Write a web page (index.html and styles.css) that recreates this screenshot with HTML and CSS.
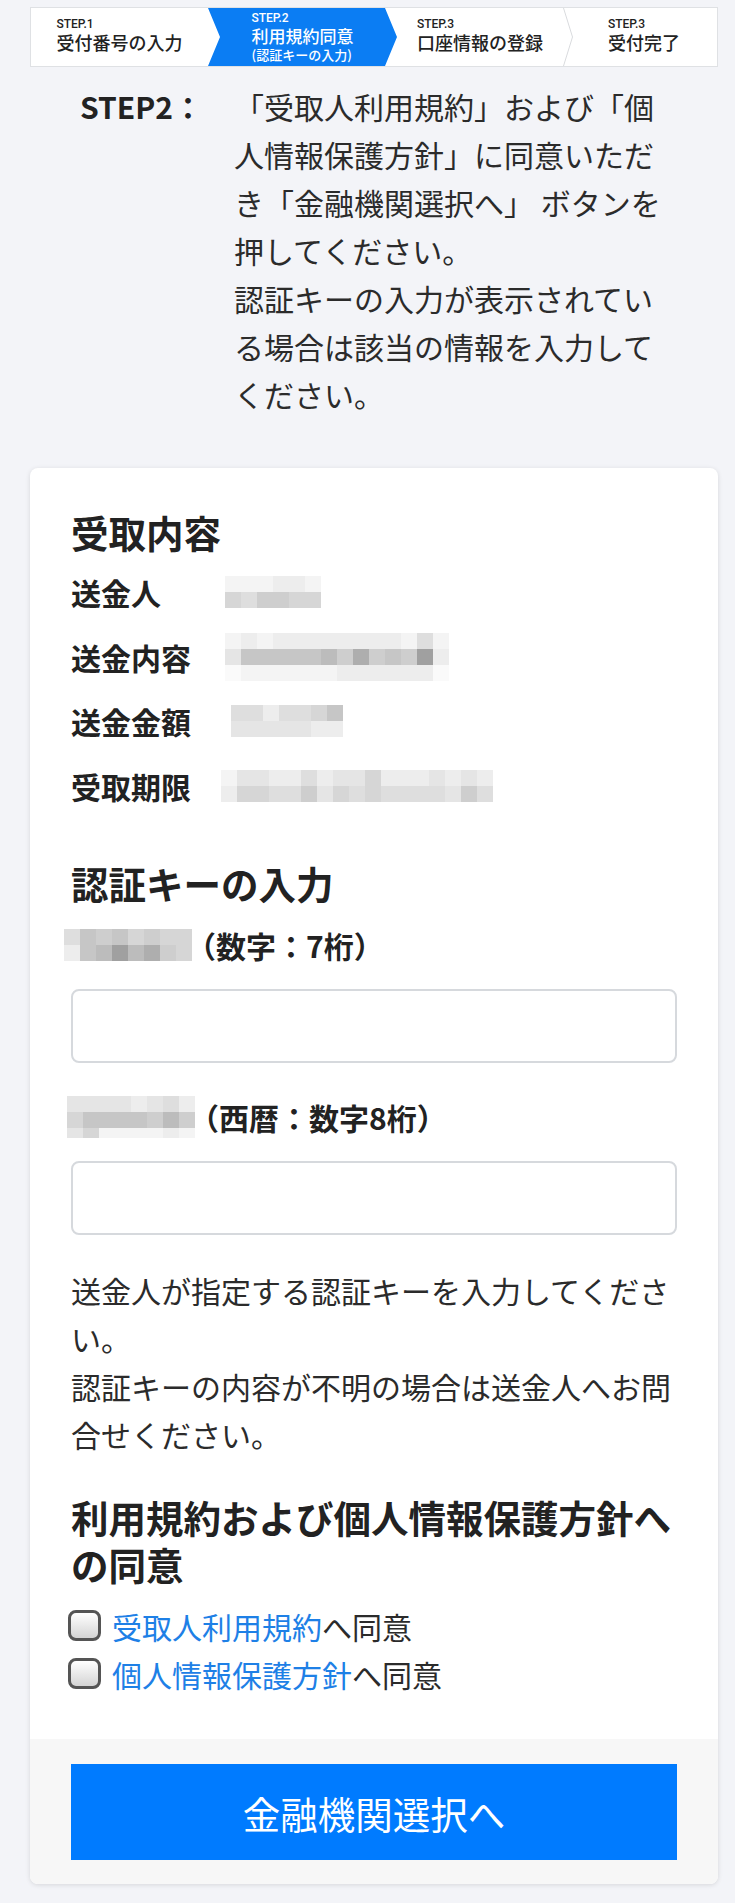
FILE: index.html
```html
<!DOCTYPE html>
<html lang="ja">
<head>
<meta charset="utf-8">
<title>利用規約同意</title>
<link rel="stylesheet" href="styles.css">
</head>
<body>
<div class="page">
  <ol class="steps">
    <li class="step step-1">
      <div class="step-text"><span class="step-no">STEP.1</span><span class="step-name">受付番号の入力</span></div>
    </li>
    <li class="step step-2">
      <div class="step-text"><span class="step-no">STEP.2</span><span class="step-name">利用規約同意</span><span class="step-sub">(認証キーの入力)</span></div>
    </li>
    <li class="step step-3">
      <div class="step-text"><span class="step-no">STEP.3</span><span class="step-name">口座情報の登録</span></div>
    </li>
    <li class="step step-4">
      <svg class="step-divider" width="11" height="58" viewBox="0 0 11 58"><polyline points="0.5,0 9.5,29 0.5,58" fill="none" stroke="#d9dbde" stroke-width="1"/></svg>
      <div class="step-text"><span class="step-no">STEP.3</span><span class="step-name">受付完了</span></div>
    </li>
  </ol>

  <div class="intro">
    <div class="intro-label">STEP2：</div>
    <p class="intro-text">「受取人利用規約」および「個人情報保護方針」に同意いただき「金融機関選択へ」 ボタンを押してください。<br>認証キーの入力が表示されている場合は該当の情報を入力してください。</p>
  </div>

  <section class="card">
    <div class="card-body">
      <h2 class="sec-title">受取内容</h2>
      <dl class="info">
        <div class="info-row">
          <dt>送金人</dt>
          <dd><div class="mz mz-6 off-4"><i class="s0"></i><i class="s0"></i><i class="s0"></i><i class="s1"></i><i class="s1"></i><i class="s0"></i><i class="s4"></i><i class="s3"></i><i class="s5"></i><i class="s5"></i><i class="s4"></i><i class="s4"></i></div></dd>
        </div>
        <div class="info-row">
          <dt>送金内容</dt>
          <dd><div class="mz mz-14 off-4"><i class="s0"></i><i class="s1"></i><i class="s0"></i><i class="s1"></i><i class="s1"></i><i class="s1"></i><i class="s1"></i><i class="s1"></i><i class="s1"></i><i class="s1"></i><i class="s1"></i><i class="s0"></i><i class="s3"></i><i class="s0"></i><i class="s2"></i><i class="s6"></i><i class="s6"></i><i class="s6"></i><i class="s6"></i><i class="s6"></i><i class="s7"></i><i class="s5"></i><i class="s8"></i><i class="s5"></i><i class="s6"></i><i class="s5"></i><i class="s9"></i><i class="s1"></i><i class="sw"></i><i class="s0"></i><i class="s0"></i><i class="s0"></i><i class="s0"></i><i class="s0"></i><i class="s0"></i><i class="s1"></i><i class="s1"></i><i class="s1"></i><i class="s1"></i><i class="s1"></i><i class="s1"></i><i class="sw"></i></div></dd>
        </div>
        <div class="info-row">
          <dt>送金金額</dt>
          <dd><div class="mz mz-7 off-10"><i class="s3"></i><i class="s3"></i><i class="s1"></i><i class="s3"></i><i class="s3"></i><i class="s4"></i><i class="s6"></i><i class="s2"></i><i class="s2"></i><i class="s2"></i><i class="s2"></i><i class="s2"></i><i class="s1"></i><i class="s1"></i></div></dd>
        </div>
        <div class="info-row">
          <dt>受取期限</dt>
          <dd><div class="mz mz-17"><i class="s0"></i><i class="s2"></i><i class="s2"></i><i class="s1"></i><i class="s1"></i><i class="s3"></i><i class="s1"></i><i class="s2"></i><i class="s2"></i><i class="s4"></i><i class="s1"></i><i class="s1"></i><i class="s1"></i><i class="s2"></i><i class="s1"></i><i class="s2"></i><i class="s1"></i><i class="s1"></i><i class="s4"></i><i class="s4"></i><i class="s3"></i><i class="s3"></i><i class="s5"></i><i class="s2"></i><i class="s4"></i><i class="s3"></i><i class="s4"></i><i class="s3"></i><i class="s3"></i><i class="s3"></i><i class="s3"></i><i class="s2"></i><i class="s5"></i><i class="s3"></i></div></dd>
        </div>
      </dl>

      <h2 class="sec-title sec-auth">認証キーの入力</h2>
      <div class="field">
        <label class="field-label" for="key1">
          <span class="mz mz-8 mz-auth1"><i class="s3"></i><i class="s6"></i><i class="s5"></i><i class="s6"></i><i class="s4"></i><i class="s5"></i><i class="s4"></i><i class="s4"></i><i class="s1"></i><i class="s6"></i><i class="s7"></i><i class="s9"></i><i class="s7"></i><i class="s8"></i><i class="s5"></i><i class="s4"></i></span>
          <span class="field-hint">（数字：7桁）</span>
        </label>
        <input class="field-input" id="key1" type="text">
      </div>
      <div class="field field-next">
        <label class="field-label" for="key2">
          <span class="mz mz-8 mz-auth2"><i class="s2"></i><i class="s2"></i><i class="s2"></i><i class="s2"></i><i class="s1"></i><i class="s2"></i><i class="s3"></i><i class="s1"></i><i class="s4"></i><i class="s6"></i><i class="s6"></i><i class="s6"></i><i class="s6"></i><i class="s5"></i><i class="s7"></i><i class="s5"></i><i class="s2"></i><i class="s4"></i><i class="s0"></i><i class="s0"></i><i class="s0"></i><i class="s0"></i><i class="s1"></i><i class="s0"></i></span>
          <span class="field-hint">（西暦：数字8桁）</span>
        </label>
        <input class="field-input" id="key2" type="text">
      </div>

      <p class="note">送金人が指定する認証キーを入力してください。<br>認証キーの内容が不明の場合は送金人へお問合せください。</p>

      <h2 class="sec-title sec-agree">利用規約および個人情報保護方針への同意</h2>
      <div class="agree-list">
        <label class="agree"><input class="agree-check" type="checkbox"><span><a class="agree-link" href="#">受取人利用規約</a>へ同意</span></label>
        <label class="agree"><input class="agree-check" type="checkbox"><span><a class="agree-link" href="#">個人情報保護方針</a>へ同意</span></label>
      </div>
    </div>
    <div class="card-footer">
      <button class="btn-next" type="button">金融機関選択へ</button>
    </div>
  </section>
</div>
</body>
</html>
```

FILE: styles.css
```css
* { box-sizing: border-box; }

html, body { margin: 0; padding: 0; }

body {
  background: #f3f4f8;
  color: #212529;
  font-family: "Noto Sans CJK JP", "Noto Sans", sans-serif;
}

.page { padding: 7px 17px 19px 30px; }

/* ---------- step bar ---------- */
.steps {
  list-style: none;
  margin: 0;
  padding: 0;
  display: flex;
  height: 60px;
  background: #fff;
  border: 1px solid #dfe1e4;
}

.step {
  position: relative;
  display: flex;
  align-items: center;
  justify-content: center;
  color: #222;
  flex: none;
}

.step-1 { width: 177px; }
.step-2 {
  width: 189px;
  background: #0b7df3;
  color: #fff;
  clip-path: polygon(0 0, calc(100% - 12px) 0, 100% 50%, calc(100% - 12px) 100%, 0 100%, 12px 50%);
}
.step-3 { width: 166px; }
.step-4 { width: 154px; padding-left: 8px; }

.step-divider { position: absolute; left: 0; top: 0; }

.step-text {
  display: flex;
  flex-direction: column;
  align-items: flex-start;
  margin-bottom: 4px;
}
.step-2 .step-text { margin-bottom: 0; margin-top: 2px; }

.step-no {
  font-family: Roboto, "Noto Sans", sans-serif;
  font-size: 12px;
  line-height: 13px;
  font-weight: 500;
}

.step-name {
  font-size: 18px;
  line-height: 22px;
  font-weight: 500;
}

.step-2 .step-name { font-size: 17px; line-height: 21px; }

.step-sub {
  font-size: 13px;
  line-height: 18px;
  font-weight: 500;
}

/* ---------- intro ---------- */
.intro {
  display: flex;
  margin-top: 15px;
  padding-left: 50px;
}

.intro-label {
  width: 154px;
  flex: none;
  font-size: 30px;
  line-height: 48px;
  font-weight: 700;
  color: #222;
}

.intro-text {
  margin: 0;
  width: 440px;
  font-size: 30px;
  line-height: 48px;
  color: #2b2b2b;
}

/* ---------- card ---------- */
.card {
  margin-top: 50px;
  background: #fff;
  border-radius: 8px;
  box-shadow: 0 1px 5px rgba(0, 0, 0, 0.12);
  overflow: hidden;
}

.card-body { padding: 40px 41px 41.5px; }

.sec-title {
  margin: 0;
  font-size: 37.5px;
  line-height: 47px;
  font-weight: 700;
  color: #222;
}

.info {
  margin: 13px 0 0;
  display: flex;
  flex-direction: column;
  gap: 16.5px;
}

.info-row {
  display: flex;
  align-items: center;
  height: 48px;
}

.info-row dt {
  width: 150px;
  flex: none;
  font-size: 30px;
  line-height: 48px;
  font-weight: 700;
  color: #222;
}

.info-row dd { margin: 0; }

/* pixelated (redacted) values */
.mz { display: grid; grid-auto-rows: 16px; }
.mz i { display: block; }
.mz-6 { grid-template-columns: repeat(6, 16px); }
.mz-7 { grid-template-columns: repeat(7, 16px); }
.mz-8 { grid-template-columns: repeat(8, 16px); }
.mz-14 { grid-template-columns: repeat(14, 16px); }
.mz-17 { grid-template-columns: repeat(17, 16px); }
.off-4 { margin-left: 4px; }
.off-10 { margin-left: 10px; }
.mz-auth1 { margin-left: -7px; }
.mz-auth2 { margin-left: -4px; grid-template-rows: 16px 16px 10px; }

.sw { background: #fafafa; }
.s0 { background: #f4f4f4; }
.s1 { background: #ededed; }
.s2 { background: #e5e5e5; }
.s3 { background: #dedede; }
.s4 { background: #d6d6d6; }
.s5 { background: #cecece; }
.s6 { background: #c6c6c6; }
.s7 { background: #bcbcbc; }
.s8 { background: #aeaeae; }
.s9 { background: #a0a0a0; }

.sec-auth { margin-top: 49px; }

.field { margin-top: 15px; }
.field-next { margin-top: 30px; }

.field-label {
  display: flex;
  align-items: center;
  height: 48px;
  margin-bottom: 20px;
}

.field-hint {
  margin-left: -6px;
  font-size: 30px;
  line-height: 48px;
  font-weight: 700;
  color: #222;
}

.field-input {
  display: block;
  width: 100%;
  height: 74px;
  margin: 0;
  padding: 0 16px;
  border: 2px solid #d6d9dd;
  border-radius: 8px;
  background: #fff;
  font-family: inherit;
  font-size: 30px;
}

.note {
  margin: 31.5px 0 0;
  font-size: 30px;
  line-height: 48px;
  color: #2b2b2b;
}

.sec-agree { margin-top: 34.5px; }

.agree-list { margin-top: 15px; }

.agree {
  display: flex;
  align-items: center;
  height: 48px;
  font-size: 30px;
  line-height: 48px;
  color: #2b2b2b;
}

.agree-check {
  appearance: none;
  -webkit-appearance: none;
  flex: none;
  width: 33px;
  height: 31px;
  margin: 0 11px 0 -3px;
  border: 3px solid #555;
  border-radius: 8px;
  background: linear-gradient(#ffffff, #d4d4d4);
}

.agree-link {
  color: #1e80e6;
  text-decoration: none;
}

.card-footer {
  padding: 25px 41px 24px;
  background: #f7f7f7;
}

.btn-next {
  display: block;
  width: 100%;
  height: 96px;
  margin: 0;
  border: 0;
  border-radius: 0;
  background: #007bff;
  color: #fff;
  font-family: inherit;
  font-size: 37.5px;
  font-weight: 400;
}
```
